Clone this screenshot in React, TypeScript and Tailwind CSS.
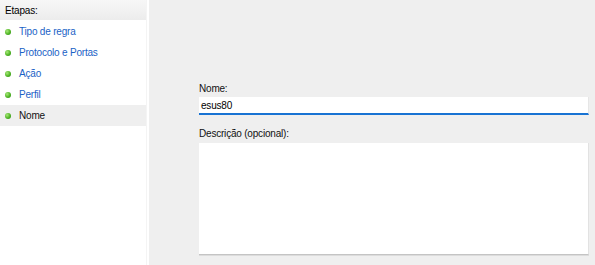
import React from "react";

const steps = [
	{ label: "Tipo de regra", active: false },
	{ label: "Protocolo e Portas", active: false },
	{ label: "Ação", active: false },
	{ label: "Perfil", active: false },
	{ label: "Nome", active: true },
];

const StepDot = () => (
	<span className="block size-[6px] rounded-full bg-[radial-gradient(circle_at_35%_35%,#a8e87a_0%,#4fb524_55%,#2a8410_100%)]" />
);

const App = () => {
	return (
		<div className="flex h-[265px] w-[595px] bg-[#efefef] font-['Liberation_Sans',Arial,sans-serif] text-[10px] tracking-[-0.2px] text-[#111]">
			{/* Etapas */}
			<div className="flex w-[149px] shrink-0 bg-white">
				<div className="flex w-[146px] flex-col">
					<div className="flex h-[20px] items-center bg-gradient-to-b from-[#f7f7f7] to-[#ececec] pl-[5px] text-black">
						Etapas:
					</div>
					<ul className="mt-[1px] flex flex-col">
						{steps.map(({ label, active }) => (
							<li
								key={label}
								className={`flex h-[21px] items-center gap-[8px] pl-[5px] ${active ? "bg-[#efefef] text-[#111]" : "text-[#1a62c6]"}`}
							>
								<StepDot />
								<span>{label}</span>
							</li>
						))}
					</ul>
				</div>
				<div className="w-[3px] border-l border-[#f4f4f4] bg-white" />
			</div>

			{/* Form */}
			<div className="flex flex-1 flex-col pl-[50px] pr-[6px] pt-[83px]">
				<label className="block h-[12px] leading-[12px]">Nome:</label>
				<div className="mt-[2px] flex h-[18px] items-center border-b-2 border-[#1873d3] border-r border-r-[#e6e6e6] bg-white pl-[2px] text-black">
					esus80
				</div>
				<label className="mt-[13px] block h-[12px] leading-[12px]">Descrição (opcional):</label>
				<div className="mt-[3px] h-[112px] border-b border-r border-b-[#c4c4c4] border-r-[#e2e2e2] bg-white shadow-[0_1px_0_#dcdcdc]" />
			</div>
		</div>
	);
};

export default App;
